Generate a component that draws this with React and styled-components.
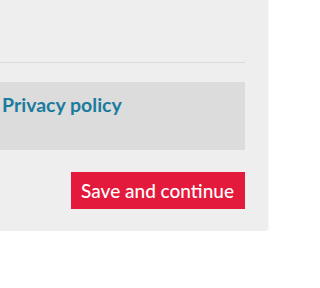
import React from "react";
import styled, { createGlobalStyle } from "styled-components";

const GlobalStyle = createGlobalStyle`
  html, body {
    margin: 0;
    padding: 0;
    background: #ffffff;
    font-family: Lato, "Open Sans", sans-serif;
  }
`;

// Grey form panel, cut off on the left
const Panel = styled.div`
  width: 245px;
  padding: 62px 23px 22px 0;
  background: #eeeeee;
  border-bottom-right-radius: 4px;
  box-shadow: 1px 1px 1px rgba(0, 0, 0, 0.03);
`;

const Divider = styled.hr`
  margin: 0;
  border: 0;
  border-top: 1px solid #dadada;
`;

const LinkBox = styled.div`
  box-sizing: border-box;
  height: 68px;
  margin-top: 19px;
  padding: 11px 0 0 2px;
  background: #dcdcdc;
`;

const PolicyLink = styled.a`
  color: #1a7b9e;
  font-size: 19.5px;
  font-weight: 700;
  line-height: normal;
  text-decoration: none;
`;

const Actions = styled.div`
  display: flex;
  justify-content: flex-end;
  margin-top: 22px;
`;

const PrimaryButton = styled.button`
  height: 37px;
  padding: 0 11px 0 10px;
  border: 0;
  border-radius: 0;
  background: #e31a3c;
  color: #ffffff;
  font-family: Lato, "Open Sans", sans-serif;
  font-size: 19px;
  font-weight: 500;
  cursor: pointer;
`;

function App() {
  return (
    <>
      <GlobalStyle />
      <Panel>
        <Divider />
        <LinkBox>
          <PolicyLink href="#">Privacy policy</PolicyLink>
        </LinkBox>
        <Actions>
          <PrimaryButton>Save and continue</PrimaryButton>
        </Actions>
      </Panel>
    </>
  );
}

export default App;
